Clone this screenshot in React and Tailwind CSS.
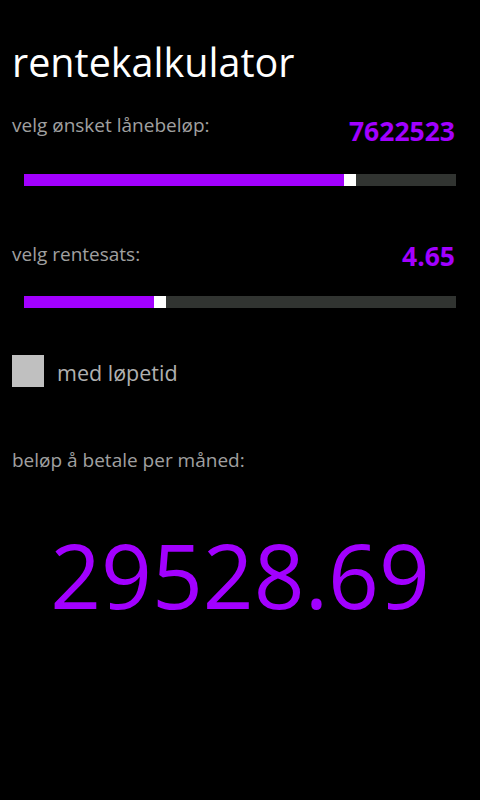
function Slider({ pct }) {
  return (
    <div className="mx-[24px] flex h-[12px] bg-[#313431]">
      <div className="h-full bg-[#a200ff]" style={{ width: `${pct}%` }} />
      <div className="h-full w-[12px] bg-white" />
    </div>
  );
}

function ValueRow({ label, value, offset }) {
  return (
    <div className="flex items-start justify-between pl-[12px] pr-[25px]">
      <span className="mt-[2px] text-[19px] leading-[24px] text-[#a0a0a0]">{label}</span>
      <span className={`${offset} text-[26.5px] font-bold leading-[28px] text-[#a200ff]`}>{value}</span>
    </div>
  );
}

export default function App() {
  return (
    <div
      className="h-[800px] w-[480px] overflow-hidden bg-black text-white"
      style={{ fontFamily: '"Open Sans", "Noto Sans", sans-serif' }}
    >
      <h1 className="pl-[12px] pt-[38px] text-[39.5px] font-normal leading-[48px]">rentekalkulator</h1>

      <div className="mt-[25px]">
        <ValueRow label="velg ønsket lånebeløp:" value="7622523" offset="mt-[6px]" />
      </div>
      <div className="mt-[29px]">
        <Slider pct={74} />
      </div>

      <div className="mt-[54px]">
        <ValueRow label="velg rentesats:" value="4.65" offset="mt-[2px]" />
      </div>
      <div className="mt-[26px]">
        <Slider pct={30} />
      </div>

      <div className="mt-[47px] flex items-start gap-[13px] pl-[12px]">
        <div className="h-[32px] w-[32px] bg-[#c0c0c0]" />
        <span className="mt-[4px] text-[21.5px] leading-[28px] text-[#b0b0b0]">med løpetid</span>
      </div>

      <div className="mt-[61px] pl-[12px] text-[19px] leading-[24px] text-[#a0a0a0]">
        beløp å betale per måned:
      </div>

      <div className="mt-[53px] text-center text-[89px] leading-[100px] text-[#a200ff]">29528.69</div>
    </div>
  );
}
